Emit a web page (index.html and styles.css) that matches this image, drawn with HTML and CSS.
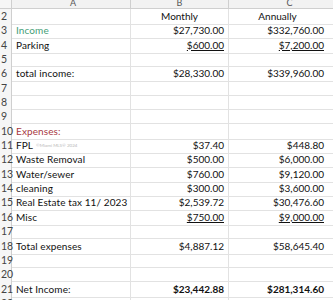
FILE: index.html
```html
<!DOCTYPE html>
<html>
<head>
<meta charset="utf-8">
<link rel="stylesheet" href="styles.css">
</head>
<body>
<div class="sheet">
  <div class="row head"><div class="rn"></div><div class="c a hc">A</div><div class="c b hc">B</div><div class="c cc hc hcc">C</div></div>
  <div class="row"><div class="rn">2</div><div class="c a"></div><div class="c b ctr">Monthly</div><div class="c cc ctr">Annually</div></div>
  <div class="row"><div class="rn">3</div><div class="c a green">Income</div><div class="c b num">$27,730.00</div><div class="c cc num">$332,760.00</div></div>
  <div class="row"><div class="rn">4</div><div class="c a">Parking</div><div class="c b num"><u>$600.00</u></div><div class="c cc num"><u>$7,200.00</u></div></div>
  <div class="row"><div class="rn">5</div><div class="c a"></div><div class="c b"></div><div class="c cc"></div></div>
  <div class="row"><div class="rn">6</div><div class="c a">total income:</div><div class="c b num">$28,330.00</div><div class="c cc num">$339,960.00</div></div>
  <div class="row"><div class="rn">7</div><div class="c a"></div><div class="c b"></div><div class="c cc"></div></div>
  <div class="row"><div class="rn">8</div><div class="c a"></div><div class="c b"></div><div class="c cc"></div></div>
  <div class="row"><div class="rn">9</div><div class="c a"></div><div class="c b"></div><div class="c cc"></div></div>
  <div class="row"><div class="rn">10</div><div class="c a red">Expenses:</div><div class="c b"></div><div class="c cc"></div></div>
  <div class="row"><div class="rn">11</div><div class="c a">FPL<span class="wm">©Miami MLS® 2024</span></div><div class="c b num">$37.40</div><div class="c cc num">$448.80</div></div>
  <div class="row"><div class="rn">12</div><div class="c a">Waste Removal</div><div class="c b num">$500.00</div><div class="c cc num">$6,000.00</div></div>
  <div class="row"><div class="rn">13</div><div class="c a">Water/sewer</div><div class="c b num">$760.00</div><div class="c cc num">$9,120.00</div></div>
  <div class="row"><div class="rn">14</div><div class="c a">cleaning</div><div class="c b num">$300.00</div><div class="c cc num">$3,600.00</div></div>
  <div class="row"><div class="rn">15</div><div class="c a">Real Estate tax 11/ 2023</div><div class="c b num">$2,539.72</div><div class="c cc num">$30,476.60</div></div>
  <div class="row"><div class="rn">16</div><div class="c a">Misc</div><div class="c b num"><u>$750.00</u></div><div class="c cc num"><u>$9,000.00</u></div></div>
  <div class="row"><div class="rn">17</div><div class="c a"></div><div class="c b"></div><div class="c cc"></div></div>
  <div class="row"><div class="rn">18</div><div class="c a">Total expenses</div><div class="c b num">$4,887.12</div><div class="c cc num">$58,645.40</div></div>
  <div class="row"><div class="rn">19</div><div class="c a"></div><div class="c b"></div><div class="c cc"></div></div>
  <div class="row"><div class="rn">20</div><div class="c a"></div><div class="c b"></div><div class="c cc"></div></div>
  <div class="row"><div class="rn">21</div><div class="c a">Net Income:</div><div class="c b num bold">$23,442.88</div><div class="c cc num bold">$281,314.60</div></div>
  <div class="row"><div class="rn">22</div><div class="c a"></div><div class="c b"></div><div class="c cc"></div></div>
</div>
</body>
</html>
```
FILE: styles.css
```css
html, body {
  margin: 0;
  padding: 0;
  background: #fff;
}
body {
  width: 333px;
  height: 300px;
  overflow: hidden;
  font-family: Lato, "Open Sans", sans-serif;
  font-size: 10px;
  color: #111;
}
.sheet {
  display: flex;
  flex-direction: column;
}
.row {
  display: grid;
  grid-template-columns: 12px 119px 98px 110px;
  height: 14.35px;
}
.row.head {
  height: 9px;
  background: #f2f2f2;
  border-bottom: 1px solid #cfcfcf;
  box-sizing: border-box;
}
.rn {
  background: #f6f6f6;
  border-right: 1px solid #cfcfcf;
  color: #444;
  font-size: 10.5px;
  line-height: 15px;
  padding-left: 1px;
  overflow: visible;
  white-space: nowrap;
  position: relative;
  z-index: 1;
}
.c {
  border-right: 1px solid #e2e2e2;
  border-bottom: 1px solid #e2e2e2;
  box-sizing: border-box;
  line-height: 15px;
  white-space: nowrap;
  overflow: visible;
  position: relative;
}
.a {
  padding-left: 4px;
  letter-spacing: 0.1px;
}
.hc {
  text-align: center;
  color: #555;
  font-size: 9px;
  line-height: 6px;
  border-bottom: none;
  border-right: 1px solid #cfcfcf;
}
.hcc {
  padding-left: 12px;
}
.ctr {
  text-align: center;
}
.cc.ctr {
  padding-right: 12px;
}
.num {
  text-align: right;
  padding-right: 4px;
}
.cc.num {
  padding-right: 14px;
}
.green {
  color: #45a077;
}
.red {
  color: #a8383f;
}
.bold {
  font-weight: 700;
}
u {
  text-decoration-thickness: 1px;
  text-underline-offset: 1px;
}
.wm {
  position: absolute;
  left: 24px;
  top: 0;
  font-size: 4.5px;
  color: #b8b8b8;
  letter-spacing: 0;
}
```
